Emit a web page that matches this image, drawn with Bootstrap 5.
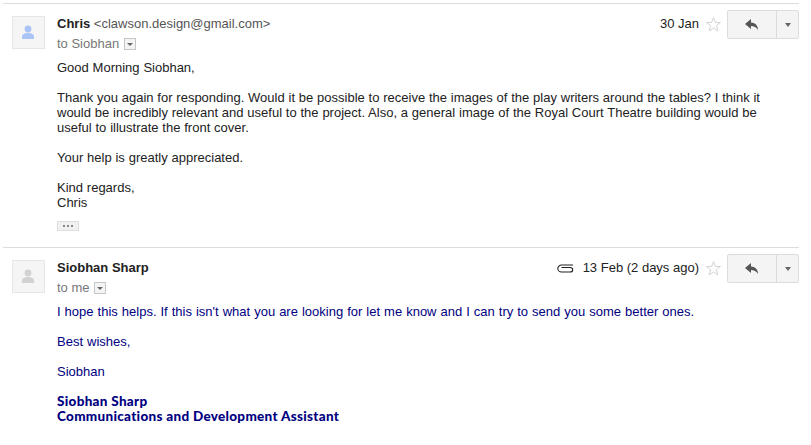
<!DOCTYPE html>
<html lang="en">
<head>
  <meta charset="UTF-8" />
  <meta name="viewport" content="width=device-width, initial-scale=1" />
  <title>Conversation</title>
  <link href="https://cdn.jsdelivr.net/npm/bootstrap@5.3.3/dist/css/bootstrap.min.css" rel="stylesheet" />
  <style>
    body {
      font-family: "Liberation Sans", Arial, sans-serif;
      font-size: 13px;
      line-height: 15px;
      color: #222;
      background: #fff;
      overflow: hidden;
    }

    .thread-wrap { padding: 3px 12px 0 3px; }

    .mail-item { border-top: 1px solid #dcdcdc; padding: 7px 0 0 9px; }
    .mail-item.first-item { height: 244px; }

    .avatar-box {
      width: 33px;
      height: 33px;
      margin-top: 5px;
      margin-right: 12px;
      background: #f5f5f5;
      border: 1px solid #e6e6e6;
      flex: none;
    }
    .avatar-box svg { display: block; }

    .mail-main { min-width: 0; flex: 1; }
    .sender-line { padding-top: 5px; }
    .sender-name { font-weight: 700; color: #222; }
    .sender-mail { color: #555; }
    .to-line { color: #777; margin-top: 5px; height: 15px; }

    .caret-box {
      display: inline-block;
      width: 12px;
      height: 12px;
      border: 1px solid #c6c6c6;
      background: #f4f4f4;
      vertical-align: -2px;
      margin-left: 1px;
      position: relative;
    }
    .caret-box::after {
      content: "";
      position: absolute;
      left: 2px;
      top: 4px;
      border: 3px solid transparent;
      border-top: 3px solid #666;
      border-bottom: 0;
    }

    .mail-date { color: #222; white-space: nowrap; margin: 5px 1px 0 0; }
    .star-icon { margin: 5px 5px 0 5px; flex: none; }
    .clip-icon { margin: 9px 9px 0 0; flex: none; }

    .reply-group {
      display: flex;
      width: 72px;
      height: 29px;
      margin-top: -1px;
      border: 1px solid #dcdcdc;
      border-radius: 2px;
      background: #f4f4f4;
      flex: none;
    }
    .reply-main {
      width: 49px;
      border-right: 1px solid #dcdcdc;
      display: flex;
      align-items: center;
      justify-content: center;
    }
    .reply-more { flex: 1; display: flex; align-items: center; justify-content: center; }
    .reply-more::after {
      content: "";
      border: 3px solid transparent;
      border-top: 4px solid #666;
      border-bottom: 0;
    }

    .mail-body { margin: 9px 12px 0 45px; word-spacing: .2px; }
    .mail-body p { margin: 0 0 15px; }

    .dots-btn {
      width: 22px;
      height: 10px;
      margin-top: -4px;
      background: #f1f1f1;
      border: 1px solid #ddd;
      display: flex;
      align-items: center;
      justify-content: center;
      gap: 2px;
    }
    .dots-btn i { width: 2px; height: 2px; background: #888; display: block; }

    .mail-body.navy-text { color: #000080; word-spacing: .4px; }
    .sign-block {
      font-family: Lato, "Open Sans", sans-serif;
      font-weight: 900;
      font-size: 13.5px;
      line-height: 15px;
      letter-spacing: .3px;
      word-spacing: 0;
    }
  </style>
</head>
<body>

<div class="thread-wrap">

  <!-- First message -->
  <div class="mail-item first-item">
    <div class="d-flex">
      <div class="avatar-box">
        <svg width="31" height="31" viewBox="0 0 31 31">
          <circle cx="15" cy="12" r="3.4" fill="#a9c4f5" />
          <path d="M9 22v-2.500c0-2 2.500-3.500 6-3.500s6 1.500 6 3.500V22z" fill="#a9c4f5" />
        </svg>
      </div>
      <div class="mail-main d-flex">
        <div class="flex-grow-1">
          <div class="sender-line"><span class="sender-name">Chris</span> <span class="sender-mail">&lt;clawson.design@gmail.com&gt;</span></div>
          <div class="to-line">to Siobhan <span class="caret-box"></span></div>
        </div>
        <div class="mail-date">30 Jan</div>
        <svg class="star-icon" width="17" height="17" viewBox="0 0 17 17"><path d="M8.500 1.500l1.900 5h5.100l-4.100 3.200 1.500 5.300-4.400-3.100-4.400 3.100 1.500-5.300L1.500 6.500h5.100z" fill="#fff" stroke="#d4d4d4" /></svg>
        <div class="reply-group">
          <div class="reply-main">
            <svg width="14" height="12" viewBox="0 0 14 12"><path d="M6 0L0 5l6 5V7c3 0 5 1 7 4 0-4-2-7-7-7.500z" fill="#555" /></svg>
          </div>
          <div class="reply-more"></div>
        </div>
      </div>
    </div>
    <div class="mail-body">
      <p>Good Morning Siobhan,</p>
      <p>Thank you again for responding. Would it be possible to receive the images of the play writers around the tables? I think it would be incredibly relevant and useful to the project. Also, a general image of the Royal Court Theatre building would be useful to illustrate the front cover.</p>
      <p>Your help is greatly appreciated.</p>
      <p>Kind regards,<br>Chris</p>
      <div class="dots-btn"><i></i><i></i><i></i></div>
    </div>
  </div>

  <!-- Second message -->
  <div class="mail-item">
    <div class="d-flex">
      <div class="avatar-box">
        <svg width="31" height="31" viewBox="0 0 31 31">
          <circle cx="15" cy="12" r="3.4" fill="#d2d2d2" />
          <path d="M9 22v-2.500c0-2 2.500-3.500 6-3.500s6 1.500 6 3.500V22z" fill="#d2d2d2" />
        </svg>
      </div>
      <div class="mail-main d-flex">
        <div class="flex-grow-1">
          <div class="sender-line"><span class="sender-name">Siobhan Sharp</span></div>
          <div class="to-line">to me <span class="caret-box"></span></div>
        </div>
        <svg class="clip-icon" width="17" height="9" viewBox="0 0 17 9"><path d="M16 1H4.500C2.500 1 .8 2.700 .8 4.500S2.500 8 4.500 8H13c1.500 0 2.700-1 2.700-2.300S14.500 3.500 13 3.500H4.500" fill="none" stroke="#222" stroke-width="1.100" /></svg>
        <div class="mail-date">13 Feb (2 days ago)</div>
        <svg class="star-icon" width="17" height="17" viewBox="0 0 17 17"><path d="M8.500 1.500l1.900 5h5.100l-4.100 3.200 1.500 5.300-4.400-3.100-4.400 3.100 1.500-5.300L1.500 6.500h5.100z" fill="#fff" stroke="#d4d4d4" /></svg>
        <div class="reply-group">
          <div class="reply-main">
            <svg width="14" height="12" viewBox="0 0 14 12"><path d="M6 0L0 5l6 5V7c3 0 5 1 7 4 0-4-2-7-7-7.500z" fill="#555" /></svg>
          </div>
          <div class="reply-more"></div>
        </div>
      </div>
    </div>
    <div class="mail-body navy-text">
      <p>I hope this helps. If this isn't what you are looking for let me know and I can try to send you some better ones.</p>
      <p>Best wishes,</p>
      <p>Siobhan</p>
      <div class="sign-block">Siobhan Sharp<br>Communications and Development Assistant</div>
    </div>
  </div>

</div>

<script src="https://cdn.jsdelivr.net/npm/bootstrap@5.3.3/dist/js/bootstrap.bundle.min.js"></script>
</body>
</html>
